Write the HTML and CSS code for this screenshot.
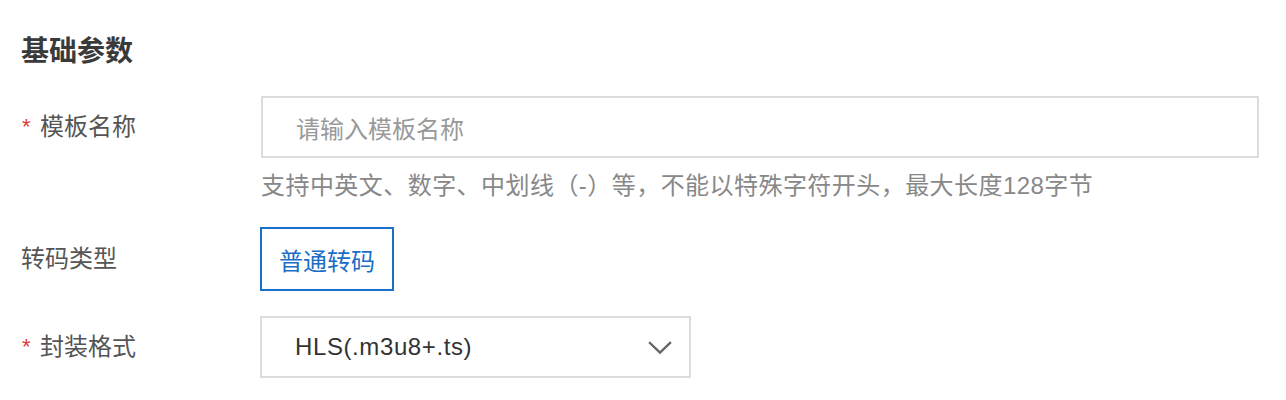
FILE: index.html
```html
<!DOCTYPE html>
<html lang="zh-CN">
<head>
<meta charset="utf-8">
<title>基础参数</title>
<link rel="stylesheet" href="styles.css">
</head>
<body>
<div class="page">
  <h2 class="section-title">基础参数</h2>
  <div class="form">
    <div class="row row-name">
      <label class="label"><span class="req">*</span>模板名称</label>
      <div class="control">
        <div class="input"><span class="placeholder">请输入模板名称</span></div>
        <div class="help">支持中英文、数字、中划线（-）等，不能以特殊字符开头，最大长度128字节</div>
      </div>
    </div>
    <div class="row row-type">
      <label class="label plain">转码类型</label>
      <div class="control">
        <div class="chip">普通转码</div>
      </div>
    </div>
    <div class="row row-format">
      <label class="label"><span class="req">*</span>封装格式</label>
      <div class="control">
        <div class="select">
          <span class="select-value">HLS(.m3u8+.ts)</span>
          <svg class="chev" width="24" height="14" viewBox="0 0 24 14"><path d="M2 2 L12 11.5 L22 2" fill="none" stroke="#666" stroke-width="2.4" stroke-linecap="square"/></svg>
        </div>
      </div>
    </div>
  </div>
</div>
</body>
</html>
```

FILE: styles.css
```css
* { box-sizing: border-box; }
html, body { margin: 0; padding: 0; background: #fff; }
body {
  font-family: "Liberation Sans", "Noto Sans CJK SC", sans-serif;
  color: #333;
}
.page {
  padding: 34px 26px 0 21px;
}
.section-title {
  margin: 0;
  font-size: 28px;
  line-height: 36px;
  font-weight: 700;
  color: #3a3a3a;
}
.form {
  margin-top: 26px;
}
.row {
  display: grid;
  grid-template-columns: 239px 999px;
  align-items: start;
}
.label {
  font-size: 24px;
  line-height: 62px;
  color: #555;
  display: flex;
  align-items: center;
}
.req {
  color: #e0393b;
  font-size: 22px;
  width: 18px;
  display: inline-block;
  margin-left: 1px;
}
.input {
  height: 62px;
  border: 2px solid #dcdcdc;
  padding-left: 33px;
  display: flex;
  align-items: center;
  margin-left: 1px;
}
.placeholder {
  font-size: 24px;
  color: #999;
}
.help {
  font-size: 24px;
  color: #888;
  line-height: 32px;
  margin-top: 12px;
  margin-left: 1px;
  letter-spacing: 0.45px;
}
.row-type {
  margin-top: 25px;
}
.row-type .label { line-height: 64px; }
.chip {
  width: 134px;
  height: 64px;
  border: 2px solid #1a70c8;
  color: #1a6ec6;
  font-size: 24px;
  display: flex;
  align-items: center;
  justify-content: center;
}
.row-format {
  margin-top: 25px;
}
.select {
  width: 431px;
  height: 62px;
  border: 2px solid #dcdcdc;
  padding: 0 17px 0 33px;
  display: flex;
  align-items: center;
  justify-content: space-between;
}
.select-value {
  font-size: 24px;
  color: #333;
  letter-spacing: 0.6px;
}
.chev { display: block; margin-top: 2px; }
```
